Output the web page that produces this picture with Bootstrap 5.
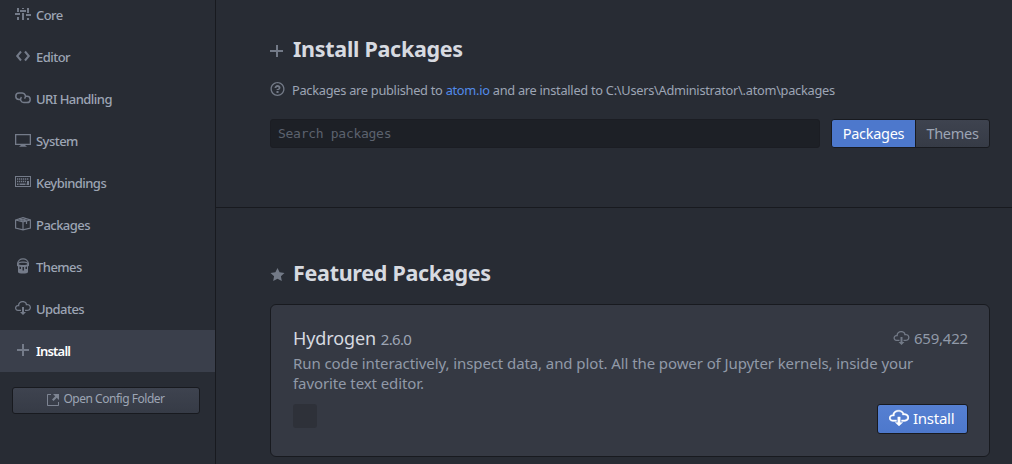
<!DOCTYPE html>
<html lang="en" data-bs-theme="dark">
<head>
<meta charset="utf-8">
<meta name="viewport" content="width=device-width, initial-scale=1">
<title>Settings</title>
<link href="https://cdn.jsdelivr.net/npm/bootstrap@5.3.0/dist/css/bootstrap.min.css" rel="stylesheet">
<style>
  body { height: 464px; background: #282c34; color: #9da5b4; font-family: "Noto Sans", sans-serif; font-size: 15px; line-height: 20px; }
  svg { display: block; fill: currentColor; flex: none; }
  .side { width: 216px; border-right: 1px solid #181a1f; }
  .side-nav { margin-top: -6px; }
  .side-nav .nav-link { height: 42px; padding: 0 0 0 15px; color: #9da5b4; font-size: 13px; font-weight: 500; letter-spacing: -.54px; }
  .side-nav .nav-link svg { width: 16px; height: 16px; margin: -3px 5px 0 0; color: #747b89; }
  .side-nav .nav-link.active { background: #3a3f4b; color: #fff; font-weight: 600; letter-spacing: -.8px; }
  .btn-atom { --bs-btn-color: #9da5b4; --bs-btn-border-color: #181a1f; --bs-btn-border-radius: 3px; --bs-btn-padding-y: 0; --bs-btn-padding-x: 10px; --bs-btn-font-size: 14.5px; --bs-btn-line-height: 20px; letter-spacing: -.28px; background: linear-gradient(#3e434f, #363b46); }
  .btn-group .btn-atom { padding-bottom: 2px; }
  .btn-atom.blue { --bs-btn-color: #fff; background: #4d78cc; }
  .btn-atom.install { width: 91px; height: 30px; padding: 0 0 2px 11px; font-size: 15px; letter-spacing: -.25px; background: linear-gradient(#5680d2, #4d78cc); }
  .install svg { stroke: currentColor; stroke-width: .3; }
  .btn-config { height: 27px; margin: 15px 15px 0 12px; padding-bottom: 3px; font-size: 12px; letter-spacing: -.48px; }
  .btn-config svg { color: #7d8492; margin-top: 2px; }
  .pane { padding: 0 22px 0 54px; }
  .top-pane { height: 208px; padding-top: 34px; border-bottom: 1px solid #181a1f; }
  .featured-pane { padding-top: 50px; }
  .heading { font-size: 21.5px; line-height: 30px; font-weight: 700; color: #d7dae0; letter-spacing: -.29px; }
  .heading svg, .hint svg, .downloads svg { color: #737a87; }
  .heading svg { margin-top: 4px; }
  .hint { font-size: 12.8px; margin-top: 16px; height: 20px; letter-spacing: -.275px; }
  .hint svg { margin: -2px 7px 0 0; }
  .hint a { color: #528bea; text-decoration: none; }
  .search { height: 29px; width: 550px; margin-right: 11px; padding: 0 7px; background: #1d2026; border: 1px solid #1b1d23; border-radius: 3px; font: 13px "DejaVu Sans Mono", monospace; letter-spacing: -.28px; }
  .search::placeholder { color: #5c626e; opacity: 1; }
  .search-row { margin-top: 19px; height: 29px; }
  .kind-packages { width: 85px; }
  .pack { height: 153px; margin-top: 16px; padding: 21px 21px 0 22px; background: #353943; border: 1px solid #181a1f; border-radius: 6px; color: #9199a8; --bs-card-bg: #353943; }
  .pack-name { font-size: 18px; line-height: 24px; color: #d7dae0; letter-spacing: -.1px; }
  .version { font-size: 15px; letter-spacing: -.65px; color: #9da5b4; }
  .downloads { letter-spacing: -.2px; padding-bottom: 2px; }
  .desc { letter-spacing: -.09px; margin-top: 2px; }
  .pack-foot { margin-top: 7px; }
  .avatar { width: 24px; height: 24px; border-radius: 3px; background: #2e3139; }
</style>
</head>
<body class="d-flex overflow-hidden">
<aside class="side flex-shrink-0 d-flex flex-column">
  <nav class="side-nav nav flex-column">
    <a class="nav-link d-flex align-items-center" href="#"><svg viewBox="0 0 16 16"><path d="M2 2h2v4H2zM0 7h5v2H0zM2 11h2v3H2zM7 2h2v1H7zM5 4h6v2H5zM7 7h2v7H7zM12 2h2v5h-2zM11 8h5v2h-5zM12 12h2v2h-2z"/></svg><span>Core</span></a>
    <a class="nav-link d-flex align-items-center" href="#"><svg viewBox="0 0 16 16"><path d="M6 3.500 2.200 8 6 12.500M10 3.500 13.800 8 10 12.500" fill="none" stroke="currentColor" stroke-width="2"/></svg><span>Editor</span></a>
    <a class="nav-link d-flex align-items-center" href="#"><svg viewBox="0 0 16 16"><path d="M5.500 9.500H4a3.200 3.200 0 0 1 0-6.400h3.300a3.200 3.200 0 0 1 2.200 5.500M10.500 6.200H12a3.200 3.200 0 0 1 0 6.400H8.700a3.200 3.200 0 0 1-2.200-5.500" fill="none" stroke="currentColor" stroke-width="1.500"/></svg><span>URI Handling</span></a>
    <a class="nav-link d-flex align-items-center" href="#"><svg viewBox="0 0 16 16"><path d="M0 2h16v11H0zM1.300 3.300v8.400h13.400V3.300zM6 13h4l2 1.800H4z" fill-rule="evenodd"/></svg><span>System</span></a>
    <a class="nav-link d-flex align-items-center" href="#"><svg viewBox="0 0 16 16"><path d="M0 2h16v11H0zM1 3v9h14V3z" fill-rule="evenodd"/><path d="M2 5h12M2 7.500h9" fill="none" stroke="currentColor" stroke-width="1.300" stroke-dasharray="1.300 .7"/><path d="M12 7h2v3h-2zM2 9.500h1.500V11H2zM4.500 9.500h6V11h-6zM11.500 9.500H14V11h-2.500z"/></svg><span>Keybindings</span></a>
    <a class="nav-link d-flex align-items-center" href="#"><svg viewBox="0 0 16 16"><path d="M.6 4 8 1.600 15.400 4v8L8 13.800.6 12zM.6 4 8 5.800 15.400 4M8 5.800v8M4 2.900l7.500 2v3M11.500 2.800 4.500 5" fill="none" stroke="currentColor" stroke-width="1.200"/></svg><span>Packages</span></a>
    <a class="nav-link d-flex align-items-center" href="#"><svg viewBox="0 0 16 16"><path d="M2.600 6C2.600-.9 13.400-.9 13.400 6" fill="none" stroke="currentColor" stroke-width="1.200"/><path d="M8 3.600c3.300 0 6 .9 6 2.300v1.800l-1 .8V14c0 2-10 2-10 0V8.500l-1-.8V5.900c0-1.400 2.700-2.300 6-2.300zm0 1.200c-2.500 0-4.400.5-4.400 1.100S5.500 7 8 7s4.400-.5 4.400-1.100S10.500 4.800 8 4.800zM4.500 8.600V11H6V9zM7.500 9v3.500H9V9zM10.500 9v2H12V8.600z" fill-rule="evenodd"/></svg><span>Themes</span></a>
    <a class="nav-link d-flex align-items-center" href="#"><svg viewBox="0 0 16 16"><path id="cloud" d="M9 12h2l-3 3-3-3h2V7h2v5zm3-8c0-.44-.91-3-4.500-3C5.080 1 3 2.920 3 5 1.020 5 0 6.520 0 8c0 1.530 1 3 3 3h3V9.700H3C1.380 9.700 1.300 8.280 1.300 8c0-.17.05-1.700 1.700-1.700h1.300V5c0-1.390 1.560-2.700 3.200-2.700 2.550 0 3.130 1.550 3.200 1.800v1.200H12c.81 0 2.700.22 2.700 2.200 0 2.090-2.250 2.200-2.700 2.200h-2V11h2c2.080 0 4-1.160 4-3.500C16 5.060 14.080 4 12 4z"/></svg><span>Updates</span></a>
    <a class="nav-link active d-flex align-items-center" href="#"><svg viewBox="0 0 16 16"><path d="M7 2h2v5h5v2H9v5H7V9H2V7h5z"/></svg><span>Install</span></a>
  </nav>
  <button class="btn btn-atom btn-config d-flex align-items-center justify-content-center"><svg class="me-1" width="12" height="16" viewBox="0 0 12 16"><path d="M11 10h1v3c0 .55-.45 1-1 1H1c-.55 0-1-.45-1-1V3c0-.55.45-1 1-1h3v1H1v10h10v-3zM6 2l2.250 2.250L5 7.500 6.500 9l3.250-3.250L12 8V2H6z"/></svg><span>Open Config Folder</span></button>
</aside>
<main class="flex-grow-1">
  <section class="pane top-pane">
    <h1 class="heading d-flex align-items-center mb-0"><svg class="me-2" width="15" height="16" viewBox="0 0 15 16"><path d="M6 2h2v5h5v2H8v5H6V9H0V7h6z"/></svg><span>Install Packages</span></h1>
    <div class="hint d-flex align-items-center"><svg width="15" height="16" viewBox="0 0 14 16"><path d="M6 10h2v2H6v-2zm4-3.500C10 8.640 8 9 8 9H6c0-.55.45-1 1-1h.5c.28 0 .5-.22.5-.5v-1c0-.28-.22-.5-.5-.5h-1c-.28 0-.5.22-.5.5V7H4c0-1.500 1.500-3 3-3s3 1 3 2.500zM7 2.300c3.140 0 5.700 2.560 5.700 5.700s-2.560 5.700-5.700 5.700A5.710 5.710 0 0 1 1.300 8c0-3.140 2.560-5.700 5.700-5.700zM7 1C3.140 1 0 4.140 0 8s3.140 7 7 7 7-3.140 7-7-3.140-7-7-7z"/></svg><span>Packages are published to <a href="#">atom.io</a> and are installed to C:\Users\Administrator\.atom\packages</span></div>
    <div class="search-row d-flex">
      <input class="search flex-shrink-0" placeholder="Search packages" aria-label="Search packages">
      <div class="btn-group flex-grow-1">
        <button class="btn btn-atom blue kind-packages flex-grow-0 flex-shrink-0">Packages</button>
        <button class="btn btn-atom">Themes</button>
      </div>
    </div>
  </section>
  <section class="pane featured-pane">
    <h2 class="heading d-flex align-items-center mb-0"><svg class="me-2" width="15" height="16" viewBox="0 0 14 16"><path d="M14 6l-4.900-.64L7 1 4.900 5.360 0 6l3.600 3.260L2.670 14 7 11.670 11.330 14l-.93-4.740L14 6z"/></svg><span>Featured Packages</span></h2>
    <article class="card pack">
      <div class="d-flex justify-content-between">
        <div class="pack-name"><span>Hydrogen</span> <small class="version">2.6.0</small></div>
        <div class="downloads d-flex align-items-center"><svg class="me-1" width="17" height="16" viewBox="0 0 16 16"><use href="#cloud"/></svg><span>659,422</span></div>
      </div>
      <div class="desc">Run code interactively, inspect data, and plot. All the power of Jupyter kernels, inside your<br>favorite text editor.</div>
      <div class="pack-foot d-flex justify-content-between">
        <div class="avatar mt-1"></div>
        <button class="btn btn-atom blue install mt-1 d-flex align-items-center"><svg class="me-1" width="20" height="18" viewBox="0 0 16 16" preserveAspectRatio="none"><use href="#cloud"/></svg><span>Install</span></button>
      </div>
    </article>
  </section>
</main>
<script src="https://cdn.jsdelivr.net/npm/bootstrap@5.3.0/dist/js/bootstrap.bundle.min.js"></script>
</body>
</html>
